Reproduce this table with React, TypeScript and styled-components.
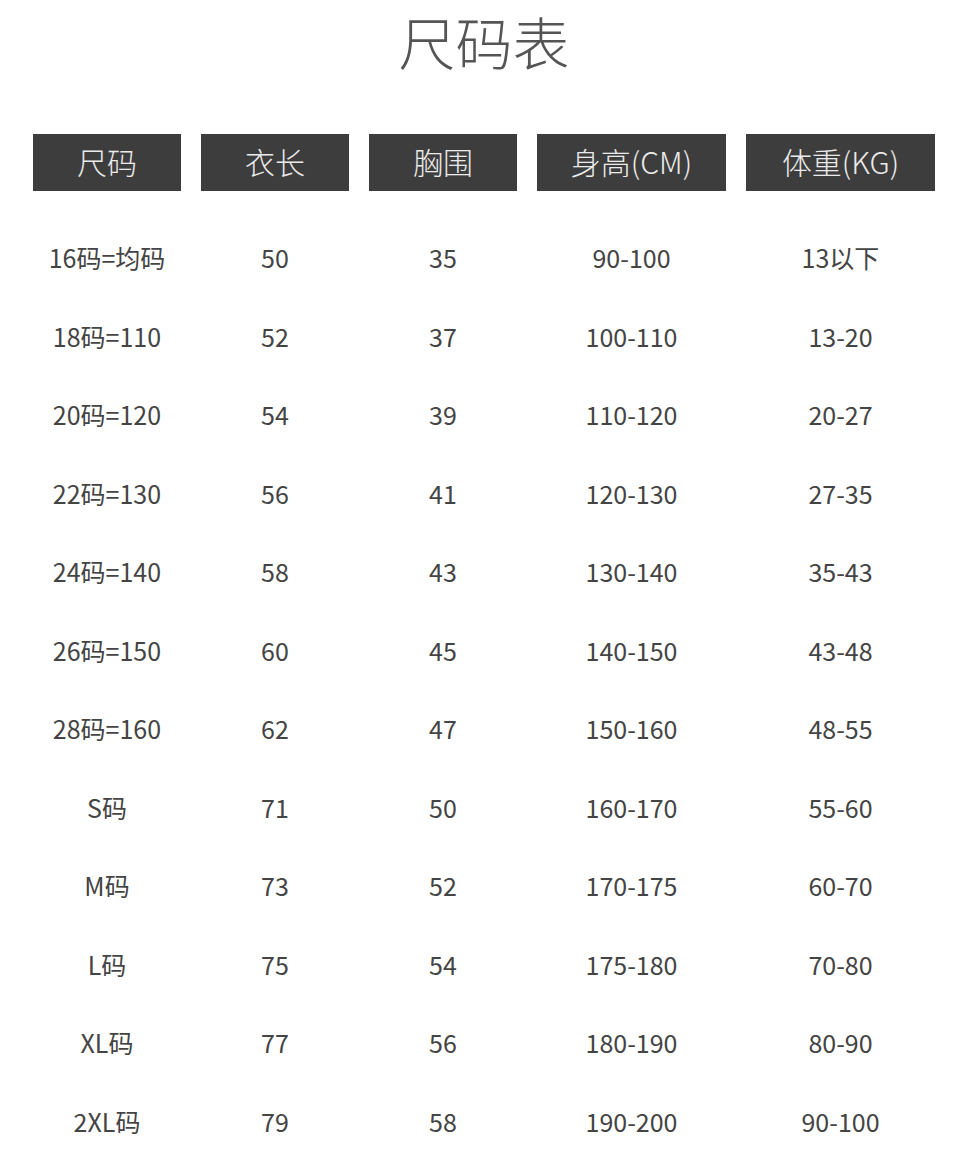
import React from 'react'
import styled, { createGlobalStyle } from 'styled-components'

const headers = ['尺码', '衣长', '胸围', '身高(CM)', '体重(KG)']

const rows = [
  ['16码=均码', '50', '35', '90-100', '13以下'],
  ['18码=110', '52', '37', '100-110', '13-20'],
  ['20码=120', '54', '39', '110-120', '20-27'],
  ['22码=130', '56', '41', '120-130', '27-35'],
  ['24码=140', '58', '43', '130-140', '35-43'],
  ['26码=150', '60', '45', '140-150', '43-48'],
  ['28码=160', '62', '47', '150-160', '48-55'],
  ['S码', '71', '50', '160-170', '55-60'],
  ['M码', '73', '52', '170-175', '60-70'],
  ['L码', '75', '54', '175-180', '70-80'],
  ['XL码', '77', '56', '180-190', '80-90'],
  ['2XL码', '79', '58', '190-200', '90-100'],
]

const App = () => {
  return (
    <>
      <GlobalStyle />
      <StyledPage>
        <StyledTitle>尺码表</StyledTitle>
        <StyledGrid>
          {headers.map((h) => (
            <StyledHead key={h}>{h}</StyledHead>
          ))}
        </StyledGrid>
        <StyledBody>
          {rows.map((row, i) => (
            <StyledGrid key={i}>
              {row.map((cell, j) => (
                <StyledCell key={j}>{cell}</StyledCell>
              ))}
            </StyledGrid>
          ))}
        </StyledBody>
      </StyledPage>
    </>
  )
}

export default App

const GlobalStyle = createGlobalStyle`
    body {
        margin: 0;
        background: #ffffff;
        font-family: "Noto Sans CJK SC", "Noto Sans", sans-serif;
    }
`
const StyledPage = styled.div`
    width: 968px;
    height: 1167px;
    background: #ffffff;
    padding: 0 33px;
    box-sizing: border-box;
    overflow: hidden;
`
const StyledTitle = styled.h1`
    margin: 0;
    height: 134px;
    padding-top: 5px;
    box-sizing: border-box;
    text-align: center;
    font-size: 57px;
    font-weight: 300;
    line-height: 70px;
    color: #555555;
`
const StyledGrid = styled.div`
    display: grid;
    grid-template-columns: 148px 148px 148px 189px 189px;
    column-gap: 20px;
`
const StyledHead = styled.div`
    height: 57px;
    padding-bottom: 4px;
    box-sizing: border-box;
    background: #3d3d3d;
    color: #ebebeb;
    font-size: 30px;
    font-weight: 300;
    display: flex;
    align-items: center;
    justify-content: center;
`
const StyledBody = styled.div`
    padding-top: 27px;
    display: grid;
    grid-auto-rows: 78.5px;
`
const StyledCell = styled.div`
    display: flex;
    align-items: center;
    justify-content: center;
    font-size: 25px;
    color: #444444;
`
